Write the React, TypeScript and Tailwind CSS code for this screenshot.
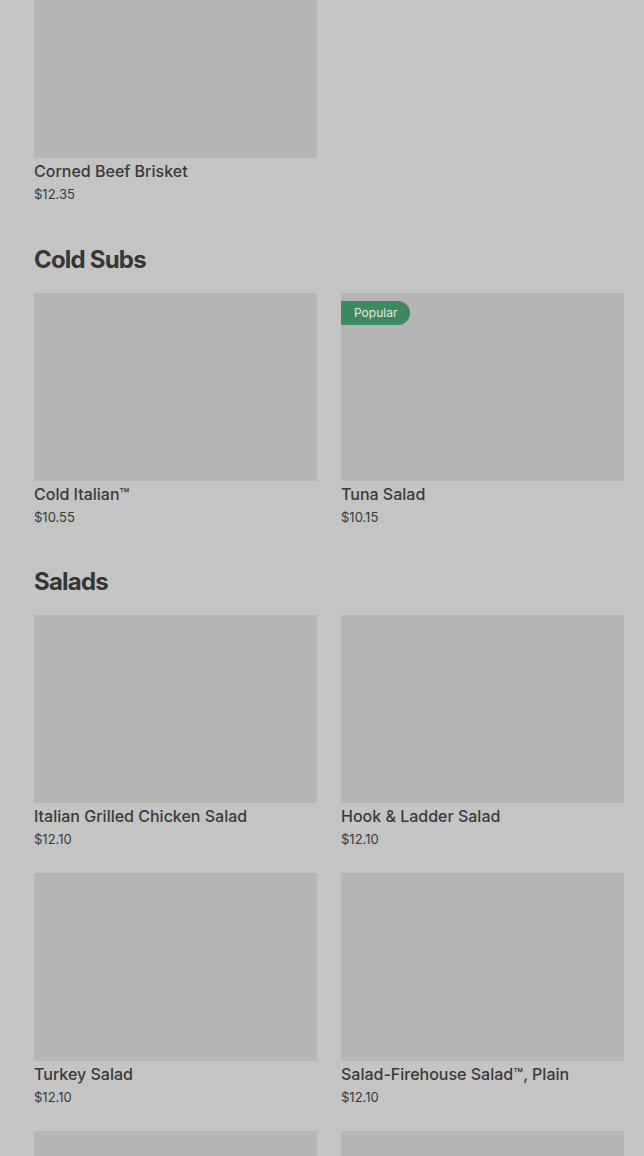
// Menu page (dimmed behind an overlay)

type Item = {
  name: string;
  price: string;
  popular?: boolean;
};

type Section = {
  title?: string;
  items: Item[];
};

const sections: Section[] = [
  {
    items: [{ name: 'Corned Beef Brisket', price: '$12.35' }],
  },
  {
    title: 'Cold Subs',
    items: [
      { name: 'Cold Italian™', price: '$10.55' },
      { name: 'Tuna Salad', price: '$10.15', popular: true },
    ],
  },
  {
    title: 'Salads',
    items: [
      { name: 'Italian Grilled Chicken Salad', price: '$12.10' },
      { name: 'Hook & Ladder Salad', price: '$12.10' },
      { name: 'Turkey Salad', price: '$12.10' },
      { name: 'Salad-Firehouse Salad™, Plain', price: '$12.10' },
      { name: 'Chicken Caesar Salad', price: '$12.10' },
      { name: 'Grilled Chicken Salad', price: '$12.10' },
    ],
  },
];

const ItemCard = ({ item }: { item: Item }) => (
  <div className="flex flex-col">
    <div className="relative h-[188px] bg-[#b5b5b5]">
      {item.popular && (
        <span className="absolute left-0 top-2 flex h-6 items-center rounded-r-full bg-[#3e8a5f] px-[13px] text-[12px] text-[#e6e6e6]">
          Popular
        </span>
      )}
    </div>
    <p className="mt-[1px] text-[16px] leading-6 font-medium text-[#3a3a3a]">
      {item.name}
    </p>
    <p className="mt-[1px] text-[13px] leading-5 text-[#3a3a3a]">{item.price}</p>
  </div>
);

export default function App() {
  return (
    <div
      className="h-[1156px] overflow-hidden bg-[#c4c4c4] pl-[34px] pr-[20px]"
      style={{ fontFamily: 'Inter, "Noto Sans", sans-serif' }}
    >
      <div className="-mt-[30px] flex flex-col">
        {sections.map((section, i) => (
          <div key={i} className={i === 1 ? 'mt-10' : i > 1 ? 'mt-[39px]' : ''}>
            {section.title && (
              <h2 className="mb-[17px] text-[24px] leading-8 font-bold tracking-[-0.8px] text-[#363636]">
                {section.title}
              </h2>
            )}
            <div className="grid grid-cols-2 gap-x-6 gap-y-6">
              {section.items.map((item) => (
                <ItemCard key={item.name} item={item} />
              ))}
            </div>
          </div>
        ))}
      </div>
    </div>
  );
}
